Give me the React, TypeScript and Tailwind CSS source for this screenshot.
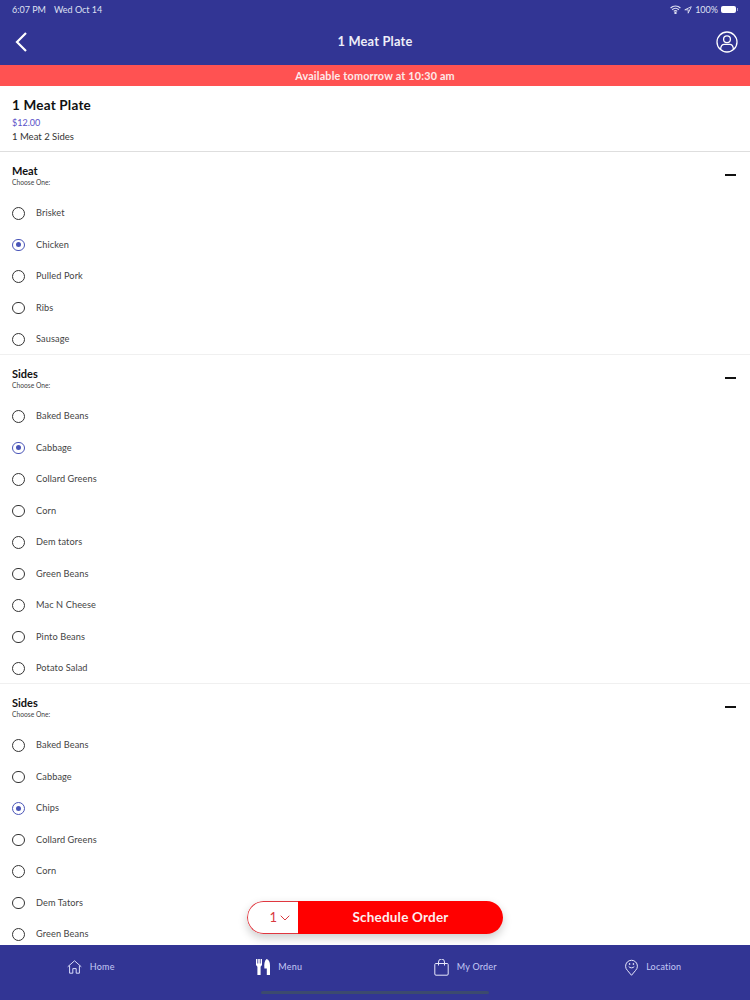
import React from "react";
import { ChevronDown } from "lucide-react";

const font = "font-['Lato','Noto_Sans',sans-serif]";

function Radio({ label, on }: { label: string; on?: boolean }) {
  return (
    <div className="flex h-[31.5px] items-center pl-3">
      <div
        className={
          on
            ? "flex h-[12.5px] w-[12.5px] items-center justify-center rounded-full border border-[#4a55b8]"
            : "flex h-[12.5px] w-[12.5px] items-center justify-center rounded-full border border-[#333333]"
        }
      >
        {on ? <div className="h-[5px] w-[5px] rounded-full bg-[#4a55b8]" /> : null}
      </div>
      <span className="ml-[11.5px] text-[9.2px] tracking-[0.1px] text-[#444444]">{label}</span>
    </div>
  );
}

function Section({ title, items, selected }: { title: string; items: string[]; selected: string }) {
  return (
    <section className="-mb-px border-t border-[#f0f0f0] first:border-[#dedede]">
      <div className="flex h-[45.5px] items-start justify-between pl-3 pr-[14px] pt-[12px]">
        <div>
          <div className="text-[11px] leading-[13px] font-bold text-[#111111]">{title}</div>
          <div className="mt-px text-[6.7px] leading-[8px] text-[#444444]">Choose One:</div>
        </div>
        <div className="mt-[10px] h-[1.5px] w-[11px] bg-[#111111]" />
      </div>
      {items.map((i) => (
        <Radio key={i} label={i} on={i === selected} />
      ))}
    </section>
  );
}

function Tab({ label, icon }: { label: string; icon: React.ReactNode }) {
  return (
    <div className="flex items-center gap-[8px]">
      {icon}
      <span className="text-[9px] tracking-[0.2px] text-[#c5caf5]">{label}</span>
    </div>
  );
}

export default function App() {
  return (
    <div className={`relative flex h-[1000px] w-[750px] flex-col overflow-hidden bg-white ${font}`}>
      <header className="h-[65px] shrink-0 bg-[#323594] text-white">
        <div className="flex h-[18px] items-center justify-between pl-3 pr-[12px] pt-[1px] text-[9px] text-[#dfe0f2]">
          <div className="flex gap-[8px]">
            <span>6:07 PM</span>
            <span>Wed Oct 14</span>
          </div>
          <div className="flex items-center gap-[3px]">
            <svg width="11" height="9" viewBox="0 0 11 9" fill="none" stroke="currentColor" strokeWidth="1.2">
              <path d="M.6 3a7 7 0 0 1 9.8 0M2.200 4.800a4.700 4.700 0 0 1 6.600 0M3.800 6.400a2.400 2.400 0 0 1 3.400 0" />
              <circle cx="5.500" cy="8" r=".6" fill="currentColor" />
            </svg>
            <svg width="8" height="8" viewBox="0 0 8 8" fill="none" stroke="currentColor" strokeWidth="0.9">
              <path d="M7.300.7 .8 3.800h3.400v3.400z" />
            </svg>
            <span>100%</span>
            <div className="flex items-center gap-px">
              <div className="h-[7px] w-[15px] rounded-[2px] bg-white" />
              <div className="h-[3px] w-px bg-[#9a9bd0]" />
            </div>
          </div>
        </div>
        <div className="flex h-[47px] items-center justify-between pl-[15px] pr-[12px] pt-px">
          <div className="w-[22px]">
            <svg width="12" height="20" viewBox="0 0 12 20" fill="none" stroke="white" strokeWidth="2.2">
              <path d="M11 1 2 10l9 9" />
            </svg>
          </div>
          <span className="pr-[3px] text-[12.8px] font-bold tracking-[0.2px] text-[#eeeef8]">1 Meat Plate</span>
          <svg width="22" height="22" viewBox="0 0 22 22" fill="none" stroke="white" strokeWidth="1.3">
            <circle cx="11" cy="11" r="10" />
            <circle cx="11" cy="8.300" r="3.400" />
            <path d="M4.600 18c.3-3 1.600-4.600 3.600-4.600h5.600c2 0 3.300 1.600 3.600 4.600" />
          </svg>
        </div>
      </header>

      <div className="flex h-[21px] shrink-0 items-center justify-center bg-[#ff5252] pt-px text-[10.8px] font-bold tracking-[0.2px] text-[#fdeaea]">
        Available tomorrow at 10:30 am
      </div>

      <div className="h-[65px] shrink-0 pl-3 pt-[10px]">
        <div className="text-[13.5px] leading-[18px] font-bold tracking-[0.2px] text-[#111111]">1 Meat Plate</div>
        <div className="mt-[3px] text-[9px] leading-[11px] text-[#5a52c8]">$12.00</div>
        <div className="mt-[3px] text-[9.5px] leading-[12px] text-[#333333]">1 Meat 2 Sides</div>
      </div>

      <main className="min-h-0 flex-1 overflow-hidden">
        <Section title="Meat" selected="Chicken" items={["Brisket", "Chicken", "Pulled Pork", "Ribs", "Sausage"]} />
        <Section
          title="Sides"
          selected="Cabbage"
          items={["Baked Beans", "Cabbage", "Collard Greens", "Corn", "Dem tators", "Green Beans", "Mac N Cheese", "Pinto Beans", "Potato Salad"]}
        />
        <Section
          title="Sides"
          selected="Chips"
          items={["Baked Beans", "Cabbage", "Chips", "Collard Greens", "Corn", "Dem Tators", "Green Beans"]}
        />
      </main>

      <footer className="grid h-[55px] shrink-0 grid-cols-4 items-center bg-[#323594] pb-[11px]">
        <div className="flex justify-center pr-[6px]">
          <Tab
            label="Home"
            icon={
              <svg width="15" height="14" viewBox="0 0 15 14" fill="none" stroke="#d9dcfa" strokeWidth="1">
                <path d="M.7 6.800 7.500.8l6.800 6M2.600 5.600v7.600h3.200V8.600h3.400v4.600h3.200V5.600" />
              </svg>
            }
          />
        </div>
        <div className="flex justify-center pr-[4px]">
          <Tab
            label="Menu"
            icon={
              <svg width="14" height="16" viewBox="0 0 14 16" fill="white">
                <path d="M0 0h1.400v4.500h.8V0h1.600v4.500h.8V0H6v6L4.600 7.800V16H1.400V7.800L0 6z" />
                <path d="M10.500 0C13 .5 14 3 14 6.500V16h-3.200V9.500H8.400C8 5 8.500 1.500 10.500 0z" />
              </svg>
            }
          />
        </div>
        <div className="flex justify-center pr-[7px]">
          <Tab
            label="My Order"
            icon={
              <svg width="15" height="17" viewBox="0 0 15 17" fill="none" stroke="#e6e7fb" strokeWidth="1">
                <path d="M1.800 4.500h11.400a1 1 0 0 1 1 1v9.500a1.200 1.200 0 0 1-1.200 1.200H2a1.200 1.200 0 0 1-1.200-1.200V5.500a1 1 0 0 1 1-1zM4.500 6.500V3a3 3 0 0 1 6 0v3.500" />
              </svg>
            }
          />
        </div>
        <div className="flex justify-center pr-[6px]">
          <Tab
            label="Location"
            icon={
              <svg width="13" height="17" viewBox="0 0 13 17" fill="none" stroke="#e6e7fb" strokeWidth="1">
                <path d="M6.500 16.300 2.400 11.400A5.900 5.900 0 1 1 10.600 11.400z" />
                <path d="M3.700 7.500c1.200 1.800 4.400 1.800 5.600 0" />
                <circle cx="4.600" cy="5" r=".5" fill="#e6e7fb" />
                <circle cx="8.400" cy="5" r=".5" fill="#e6e7fb" />
              </svg>
            }
          />
        </div>
      </footer>

      <div className="absolute bottom-[6px] left-[261px] h-[3px] w-[228px] rounded-full bg-[#3c4a6e]" />

      <div className="absolute left-[247px] top-[901px] flex h-[33px] w-[256px] overflow-hidden rounded-full shadow-[0_4px_10px_rgba(0,0,0,0.2)]">
        <div className="flex w-[51px] items-center justify-end rounded-l-full border border-r-0 border-[#e0373f] bg-white pr-[5px] text-[13px] text-[#d9393f]">
          <span>1</span>
          <ChevronDown size={16} strokeWidth={1.5} />
        </div>
        <div className="flex flex-1 items-center justify-center bg-[#ff0000] text-[13.5px] font-bold tracking-[0.2px] text-[#fdeeee]">
          Schedule Order
        </div>
      </div>
    </div>
  );
}
